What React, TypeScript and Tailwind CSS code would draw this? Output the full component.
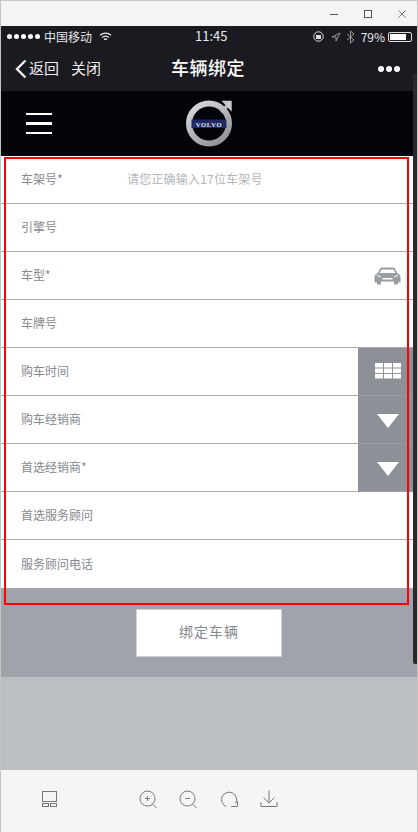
const font = { fontFamily: '"Noto Sans CJK SC", "Liberation Sans", sans-serif' };

const rows = [
  { label: "车架号*", hint: "请您正确输入17位车架号" },
  { label: "引擎号" },
  { label: "车型*", icon: "car" },
  { label: "车牌号" },
  { label: "购车时间", icon: "grid" },
  { label: "购车经销商", icon: "down" },
  { label: "首选经销商*", icon: "down" },
  { label: "首选服务顾问" },
  { label: "服务顾问电话", last: true },
];

function CarIcon() {
  return (
    <svg width="27" height="18" viewBox="0 0 27 18" fill="#9a9da1">
      <path d="M6 1.500Q6.500 0.500 8 0.500H19Q20.500 0.500 21 1.500L23.500 6.500Q26.500 7.500 26.500 10V15.500H24V17.500H20V14.500H7V17.500H3V15.500H0.500V10Q0.500 7.500 3.500 6.500ZM7.500 2.500L5.500 6H21.500L19.500 2.500ZM2.500 8.500L7 10.500V9.500L3.500 8ZM24.500 8.500L20 10.500V9.500L23.500 8ZM8.500 11V12.500H18.500V11Z" fillRule="evenodd" />
    </svg>
  );
}

function GridIcon() {
  return (
    <svg width="26" height="16" viewBox="0 0 26 16" fill="#fff">
      {[0, 5.500, 11].map((y) =>
        [0, 9, 18].map((x) => <rect key={`${x}-${y}`} x={x} y={y} width="8" height="4.500" />)
      )}
    </svg>
  );
}

function DownIcon() {
  return (
    <svg className="mt-[4px]" width="22" height="14" viewBox="0 0 22 14" fill="#fff">
      <path d="M0 0H22L11 14Z" />
    </svg>
  );
}

function FormRow({ row }: { row: (typeof rows)[number] }) {
  const boxed = row.icon === "grid" || row.icon === "down";
  return (
    <div className={`flex h-[48px] items-center text-[12px] text-[#85888d] ${row.last ? "" : "border-b border-[#a9abad]"}`}>
      <span className="w-[125px] shrink-0 pb-[1px] pl-[20px]">{row.label}</span>
      {row.hint && <span className="pb-[1px] pl-[1px] tracking-[0.2px] text-[#b3b5b8]">{row.hint}</span>}
      {row.icon === "car" && (
        <span className="ml-auto mr-[16px] flex">
          <CarIcon />
        </span>
      )}
      {boxed && (
        <span className="ml-auto flex h-[48px] w-[59px] items-center justify-center border-b border-[#9a9da3] bg-[#8d9097]">
          {row.icon === "grid" ? <GridIcon /> : <DownIcon />}
        </span>
      )}
    </div>
  );
}

export default function App() {
  return (
    <div className="relative h-[832px] w-[418px] overflow-hidden border-x border-[#c4c4c4] bg-[#f5f5f5]" style={font}>
      {/* window chrome */}
      <div className="flex h-[26px] items-center justify-end gap-[24px] border-t border-[#c8c8c8] bg-[#f4f4f4] pr-[10px]">
        <svg width="10" height="10" viewBox="0 0 10 10" stroke="#555" fill="none">
          <path d="M1 5.500H9" />
        </svg>
        <svg width="10" height="10" viewBox="0 0 10 10" stroke="#555" fill="none">
          <rect x="1.500" y="1.500" width="7" height="7" />
        </svg>
        <svg width="10" height="10" viewBox="0 0 10 10" stroke="#777" fill="none">
          <path d="M1.500 1.500L8.500 8.500M8.500 1.500L1.500 8.500" />
        </svg>
      </div>

      {/* phone status bar */}
      <div className="relative flex h-[21px] items-center bg-[#1b1a20] pl-[6px] pr-[5px] text-[12px] text-[#e8e8e8]">
        <div className="flex gap-[2px]">
          {[0, 1, 2, 3, 4].map((i) => (
            <span key={i} className="h-[5px] w-[5px] rounded-full bg-white" />
          ))}
        </div>
        <span className="ml-[4px]">中国移动</span>
        <svg className="ml-[7px]" width="13" height="10" viewBox="0 0 13 10" fill="none" stroke="#eee" strokeWidth="1.300">
          <path d="M1 3.200Q6.500 -1 12 3.200M3 5.500Q6.500 2.800 10 5.500M5 7.500Q6.500 6.500 8 7.500" />
        </svg>
        <span className="absolute left-[194px] pb-[2px] text-[13px]">11:45</span>
        <div className="ml-auto flex items-center">
          <svg width="11" height="11" viewBox="0 0 11 11" fill="none" stroke="#ddd">
            <circle cx="5.500" cy="5.500" r="4.700" />
            <rect x="3.500" y="4.500" width="4" height="3" fill="#ddd" />
          </svg>
          <svg className="ml-[7px]" width="10" height="10" viewBox="0 0 10 10" fill="none" stroke="#999">
            <path d="M9 1L1 5H5V9Z" />
          </svg>
          <svg className="ml-[5px]" width="9" height="14" viewBox="0 0 9 14" fill="none" stroke="#999">
            <path d="M1 4L8 10L4.500 13V1L8 4L1 10" />
          </svg>
          <span className="ml-[6px]">79%</span>
          <span className="ml-[3px] flex h-[10px] w-[24px] rounded-[2px] border border-[#ddd] p-[1px]">
            <span className="w-[78%] bg-white" />
          </span>
        </div>
      </div>

      {/* nav bar */}
      <div className="relative flex h-[44px] items-center bg-[#1b1a20] pl-[14px] pr-[17px] text-[#eee]">
        <svg width="12" height="20" viewBox="0 0 12 20" fill="none" stroke="#f0f0f0" strokeWidth="2.400">
          <path d="M10.500 1.500L2 10L10.500 18.500" />
        </svg>
        <span className="ml-[2px] pb-[2px] text-[15px]">返回</span>
        <span className="ml-[12px] pb-[2px] text-[15px]">关闭</span>
        <span className="absolute left-[170px] pb-[3px] text-[18px] font-medium tracking-[0.5px] text-white">车辆绑定</span>
        <div className="ml-auto flex gap-[2px]">
          {[0, 1, 2].map((i) => (
            <span key={i} className="h-[6px] w-[6px] rounded-full bg-white" />
          ))}
        </div>
      </div>

      {/* brand header */}
      <div className="relative flex h-[65px] items-center bg-[#03030a] pl-[25px]">
        <div className="flex w-[26px] flex-col gap-[7px]">
          <span className="h-[2.500px] bg-white" />
          <span className="h-[2.500px] bg-white" />
          <span className="h-[2.500px] bg-white" />
        </div>
        <svg className="absolute left-[184px] top-[8px]" width="50" height="50" viewBox="0 0 50 50" fill="none">
          <defs>
            <linearGradient id="ring" x1="0.150" y1="0" x2="0.850" y2="1">
              <stop offset="0" stopColor="#d6d7d8" />
              <stop offset="0.500" stopColor="#b4b6b8" />
              <stop offset="1" stopColor="#8f9193" />
            </linearGradient>
          </defs>
          <circle cx="24" cy="24.500" r="20" stroke="url(#ring)" strokeWidth="6" />
          <path d="M36 13L42 7" stroke="#b9bcbf" strokeWidth="3.500" />
          <path d="M36.500 1.700H46.700V12.700Z" fill="#c9cbcd" />
          <rect x="6.500" y="20.500" width="35" height="8.500" fill="#1f2a63" />
          <text x="24" y="27.500" textAnchor="middle" fontSize="6.500" fontWeight="700" fill="#e8e8ee" fontFamily="'Liberation Serif', serif" letterSpacing="0.700">
            VOLVO
          </text>
        </svg>
      </div>

      {/* form */}
      <div className="bg-white">
        {rows.map((row) => (
          <FormRow key={row.label} row={row} />
        ))}
      </div>

      {/* submit area */}
      <div className="flex h-[89px] items-start justify-center bg-[#a0a3ab] pt-[21px]">
        <button className="flex h-[48px] w-[146px] items-center justify-center border border-[#cfd1d4] bg-white pb-[4px] text-[14px] tracking-[1px] text-[#85888d]">
          绑定车辆
        </button>
      </div>
      <div className="h-[93px] bg-[#bcbfc4]" />

      {/* viewer toolbar */}
      <div className="relative h-[63px] bg-[#f5f5f5]">
        <svg className="absolute left-[40px] top-[20px]" width="18" height="18" viewBox="0 0 18 18" fill="none" stroke="#777">
          <rect x="1.500" y="1.500" width="14" height="10" />
          <rect x="1.500" y="13.500" width="6" height="3" />
          <rect x="9.500" y="13.500" width="6" height="3" />
        </svg>
        <svg className="absolute left-[138px] top-[20px]" width="20" height="20" viewBox="0 0 20 20" fill="none" stroke="#777">
          <circle cx="8.500" cy="8.500" r="7.500" />
          <path d="M13.500 14L17.500 18M6 8.500H11M8.500 6V11" />
        </svg>
        <svg className="absolute left-[178px] top-[20px]" width="20" height="20" viewBox="0 0 20 20" fill="none" stroke="#777">
          <circle cx="8.500" cy="8.500" r="7.500" />
          <path d="M13.500 14L17.500 18M6 8.500H11" />
        </svg>
        <svg className="absolute left-[219px] top-[20px]" width="19" height="19" viewBox="0 0 19 19" fill="none" stroke="#777">
          <path d="M6 16.500A7.500 7.500 0 1 1 15.500 13.500" />
          <path d="M17.500 11V16.500H11" />
        </svg>
        <svg className="absolute left-[259px] top-[20px]" width="18" height="18" viewBox="0 0 18 18" fill="none" stroke="#777">
          <path d="M9 0.500V12M3.500 7.500L9 13L14.500 7.500M1 12V16.500H17V12" />
        </svg>
      </div>

      {/* annotation box and scrollbar on top of the capture */}
      <div className="absolute left-[3px] top-[157px] h-[448px] w-[405px] border-2 border-[#ff0000]" />
      <div className="absolute right-0 top-[74px] h-[590px] w-[4px] rounded-l-[2px] bg-[#2a2a2e]" />
    </div>
  );
}
